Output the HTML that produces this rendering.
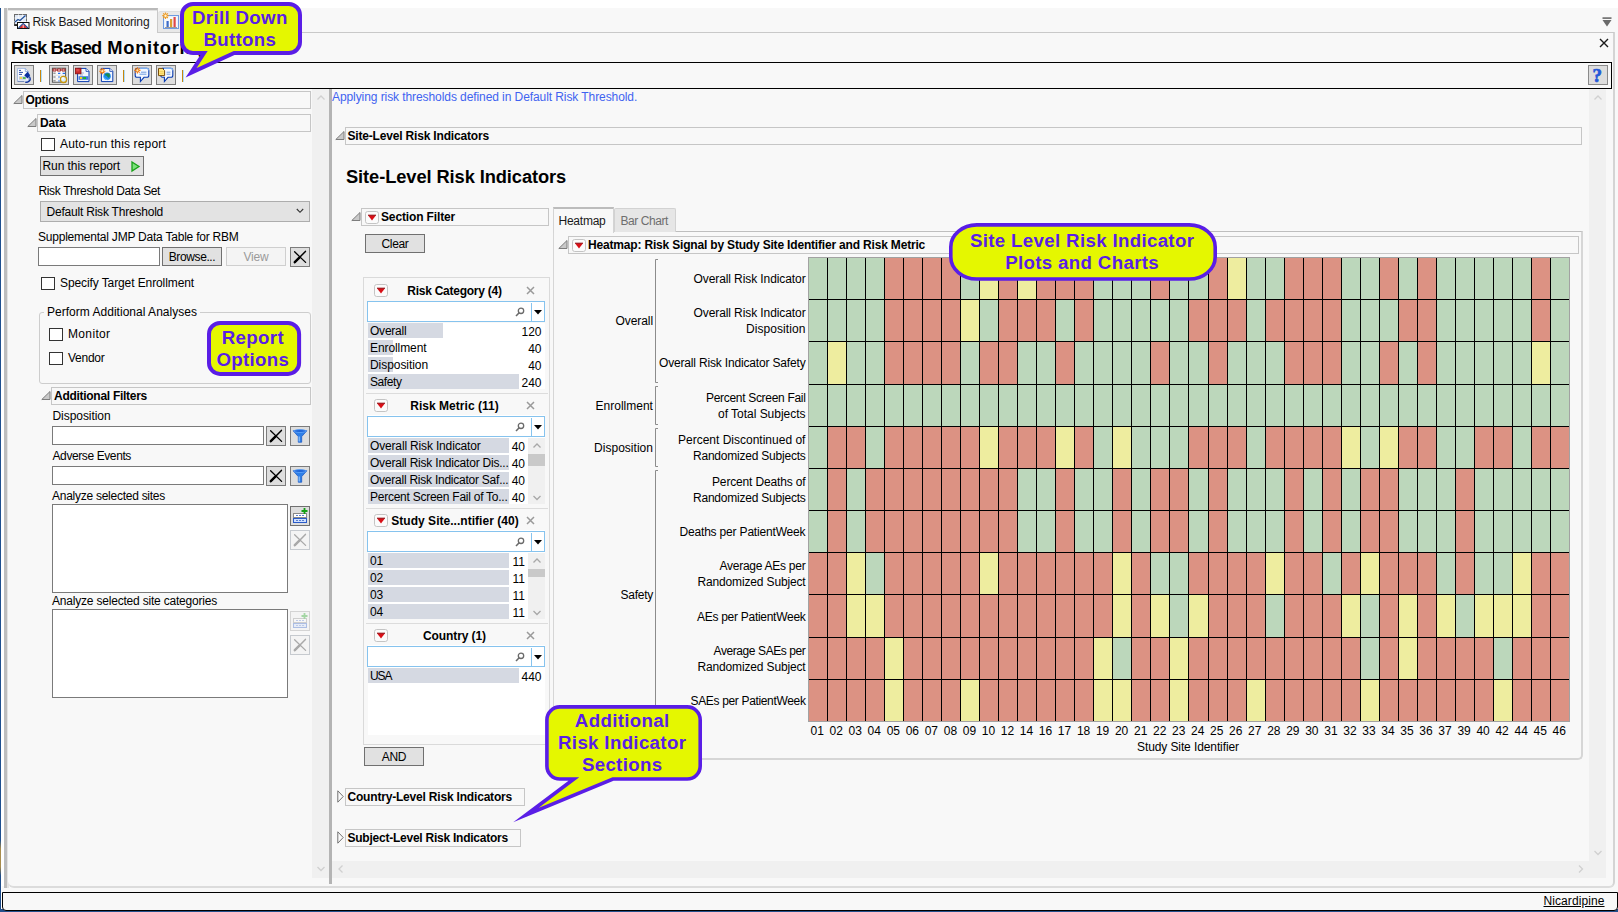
<!DOCTYPE html>
<html lang="en"><head><meta charset="utf-8"><title>Risk Based Monitoring</title>
<style>
html,body{margin:0;padding:0;background:#fff;}
body{width:1618px;height:912px;overflow:hidden;position:relative;font-family:"Liberation Sans",Arial,sans-serif;font-size:12px;color:#000;}
#app{position:absolute;left:0;top:0;width:1618px;height:912px;overflow:hidden;background:#fff;}
#app div,#app svg{position:absolute;box-sizing:border-box;}
#app svg{overflow:visible;}
#app svg text{font-family:"Liberation Sans",Arial,sans-serif;}
.t{white-space:nowrap;}
</style></head><body>
<div id="app">
<div style="left:0px;top:8px;width:1.2px;height:904px;background:linear-gradient(#1d4f8f 0,#1d4f8f 92%,#a88c4c 93%,#a88c4c 95%,#1b4a88 96%);"></div>
<div style="left:0px;top:909px;width:1618px;height:3px;background:#24508c;"></div>
<div style="left:2px;top:886px;width:1616px;height:8px;background:#f8f8f8;"></div>
<div style="left:4px;top:8px;width:3px;height:880px;background:#bdbdbd;"></div>
<div style="left:7px;top:8px;width:1.5px;height:880px;background:#e3e3e3;"></div>
<div style="left:8px;top:8px;width:1610px;height:25px;background:#f8f8f8;"></div>
<div style="left:1608px;top:32px;width:10px;height:860px;background:#f8f8f8;"></div>
<div style="left:8px;top:32px;width:1607px;height:856px;background:#f8f8f8;border-right:2px solid #d4d4d4;border-bottom:2px solid #dcdcdc;border-radius:0 0 6px 6px;"></div>
<div style="left:8px;top:8px;width:149.5px;height:25px;background:#f8f8f8;border-top:2px solid #b9b9b9;border-right:1px solid #c9c9c9;"></div>
<div style="left:8px;top:10px;width:148.5px;height:1px;background:#e2e2e2;"></div>
<div style="left:157.5px;top:11px;width:30px;height:21.5px;background:#e8e8e8;border-radius:3px 0 0 0;border-top:1px solid #dedede;"></div>
<div style="left:157px;top:32px;width:1457px;height:1px;background:#c9c9c9;"></div>
<svg style="left:14px;top:14px;" width="16" height="15" viewBox="0 0 16 15"><rect x="0.5" y="0.5" width="12" height="11" fill="#dfe8f5" stroke="#6b6b6b"/><path d="M0.5 4 H12.5 M0.5 7.5 H12.5 M4.5 0.5 V11.5 M8.5 0.5 V11.5" stroke="#f4f7fb" stroke-width="1"/><path d="M1 8 L4 5.5 L6 6.5 L11.5 1.5" stroke="#1f4e9a" stroke-width="1.2" fill="none"/><path d="M0.5 11 H4" stroke="#111" stroke-width="1.6"/><rect x="3.5" y="8.5" width="11.5" height="6" fill="#fff" stroke="#111"/><path d="M5 14 L9.2 9.4 L13.5 14 Z" fill="#e02f2f"/><path d="M9.2 9.4 L9.2 14" stroke="#fff" stroke-width="0.8"/><path d="M4.5 14 L9.2 9.4 L14 14" stroke="#1f4e9a" stroke-width="1.1" fill="none"/></svg>
<div class="t" style="left:32.5px;top:14px;font-size:12px;line-height:16px;color:#1a1a1a;letter-spacing:-0.15px;">Risk Based Monitoring</div>
<svg style="left:162px;top:12px;" width="18" height="17" viewBox="0 0 18 17"><rect x="1.5" y="3.5" width="15" height="13" fill="#dfeaf8" stroke="#6f9be0"/><rect x="2.5" y="4.5" width="13" height="11" fill="#f6f9fd"/><rect x="4.5" y="9" width="2.2" height="6" fill="#3c6cc8"/><rect x="8" y="7" width="2.2" height="8" fill="#dba030"/><rect x="11.5" y="5" width="2.2" height="10" fill="#e04848"/><path d="M3 15.5 H15" stroke="#9a9a9a"/><path d="M3.5 0.5 L3.5 7 M0.3 3.7 L6.7 3.7 M1.2 1.4 L5.8 6 M5.8 1.4 L1.2 6" stroke="#f09a20" stroke-width="1.2"/><circle cx="3.5" cy="3.7" r="1.2" fill="#fff3d0"/></svg>
<svg style="left:1602px;top:17px;" width="10" height="10" viewBox="0 0 10 10"><rect x="0.5" y="0.3" width="9" height="1.6" fill="#6a6a6a"/><path d="M0.5 3 L9.5 3 L5 9.6 Z" fill="#6a6a6a"/></svg>
<svg style="left:1599px;top:38px;" width="10" height="10" viewBox="0 0 10 10"><path d="M1 1 L9 9 M9 1 L1 9" stroke="#1a1a1a" stroke-width="1.4" fill="none"/></svg>
<div class="t" style="left:11px;top:36px;font-size:18.3px;line-height:23px;font-weight:bold;letter-spacing:-0.82px;">Risk Based</div>
<div class="t" style="left:107.3px;top:36px;font-size:18.3px;line-height:23px;font-weight:bold;letter-spacing:0.75px;">Monitoring</div>
<div class="b" style="left:11px;top:62px;width:1601px;height:27px;border:1px solid #000;background:#f8f8f8;"></div>
<div class="b" style="left:14px;top:65px;width:20px;height:20px;border:1px solid #7c7c7c;background:#dedede;"></div>
<svg style="left:16px;top:67px;" width="16" height="16" viewBox="0 0 16 16"><path d="M1.6 1.4 H9.3 L12.4 4.5 V14.2 H1.6 Z" fill="#fdfdff" stroke="#9db4dd" stroke-width="0.9"/><path d="M9.3 1.4 V4.5 H12.4" fill="none" stroke="#7f9fd6" stroke-width="0.8"/><path d="M3 3.4 H5 M3 5.4 H7 M3 7.4 H6" stroke="#2a4fa8" stroke-width="1"/><rect x="3" y="9.3" width="7.4" height="3.4" fill="#b8c8e6"/><rect x="3.8" y="10" width="2.2" height="2" fill="#f6d24a"/><rect x="7" y="10" width="2.6" height="2" fill="#58b858"/><path d="M8.2 8.2 L11.6 4.8 L14.2 8.2 L11.6 11.6 Z" fill="#0a2f9e"/><path d="M13.4 9.5 Q15.2 12.5 13 14.3 Q11.5 15.5 9.3 15.3" fill="none" stroke="#0a2f9e" stroke-width="1.3"/><path d="M1.6 14.5 H8" stroke="#6f86b8" stroke-width="0.9"/></svg>
<div class="b" style="left:49px;top:65px;width:20px;height:20px;border:1px solid #7c7c7c;background:#dedede;"></div>
<svg style="left:51px;top:67px;" width="16" height="16" viewBox="0 0 16 16"><rect x="1.4" y="1.2" width="13.2" height="14" fill="#fbfbfb" stroke="#555" stroke-width="1"/><path d="M2 2 H5 V4 H2 Z M6.3 2 H9.7 V4 H6.3 Z M11 2 H14 V4 H11 Z" fill="#fff" stroke="#a31c1c" stroke-width="1"/><path d="M2.3 6.3 H4.6 M2.3 10 H4.6 M2.3 13.8 H4.6" stroke="#9a9a9a" stroke-width="1.4"/><path d="M2 8.2 H14 M2 12 H8" stroke="#d0d0d0" stroke-width="0.7"/><path d="M7 6.3 H9.3 M11.6 6.3 H14 M7.4 10 H8.6 M7.4 13.8 H8.6" stroke="#1e6ef0" stroke-width="1.3"/><circle cx="12.5" cy="12.4" r="3.1" fill="#d6ecfb" stroke="#c8960c" stroke-width="1.3"/><circle cx="11.8" cy="11.6" r="1.3" fill="#ffffff" opacity="0.8"/></svg>
<div class="b" style="left:73px;top:65px;width:20px;height:20px;border:1px solid #7c7c7c;background:#dedede;"></div>
<svg style="left:75px;top:67px;" width="16" height="16" viewBox="0 0 16 16"><path d="M2.6 1.4 H11 L14 4.4 V14.6 H2.6 Z" fill="#f2f6fd" stroke="#0a3cb0" stroke-width="1"/><path d="M11 1.4 V4.4 H14" fill="#fff" stroke="#0a3cb0" stroke-width="0.8"/><path d="M5 6 H9 M5 8 H8" stroke="#8a9cc0" stroke-width="0.8"/><rect x="3.6" y="9.2" width="9.6" height="3.6" fill="#3c78e0"/><rect x="4.9" y="10" width="2.2" height="2" fill="#f6d21e"/><rect x="8.2" y="10" width="2.8" height="2" fill="#1eb81e"/><rect x="0.4" y="1.2" width="5.6" height="5.6" fill="#c82828" stroke="#8a1010" stroke-width="0.8"/><rect x="1.2" y="2" width="3.2" height="2.4" fill="#e05050" opacity="0.8"/></svg>
<div class="b" style="left:97px;top:65px;width:20px;height:20px;border:1px solid #7c7c7c;background:#dedede;"></div>
<svg style="left:99px;top:67px;" width="16" height="16" viewBox="0 0 16 16"><path d="M2.4 1.4 H10.8 L13.8 4.4 V14.6 H2.4 Z" fill="#f4f8ff" stroke="#0a3cb0" stroke-width="1"/><path d="M10.8 1.4 V4.4 H13.8" fill="#fff" stroke="#0a3cb0" stroke-width="0.8"/><circle cx="8.1" cy="9.3" r="3.7" fill="#1e8cf0"/><path d="M6.2 7 Q8 5.6 10.4 6.6 Q11.6 8.4 10.4 10.6 Q8.8 11 8.2 9.6 Q7.8 8.2 6.2 8.4 Z" fill="#1a8a50"/><path d="M5 10.6 Q6.4 12.6 8.4 12.9 Q6.6 12.6 5 10.6 Z" fill="#6cc8ff" stroke="#6cc8ff" stroke-width="0.6"/><g stroke="#f07a10" stroke-width="1.1"><path d="M3.3 1.1 V7.3 M0.2 4.2 H6.4 M1.07 1.97 L5.53 6.43 M5.53 1.97 L1.07 6.43"/></g><circle cx="3.3" cy="4.2" r="1.1" fill="#ffe9b0"/></svg>
<div class="b" style="left:132px;top:65px;width:20px;height:20px;border:1px solid #7c7c7c;background:#dedede;"></div>
<svg style="left:134px;top:67px;" width="16" height="16" viewBox="0 0 16 16"><path d="M3 1.4 H13 Q14.8 1.4 14.8 3.4 V8.2 Q14.8 10.3 13 10.3 H10 L6.4 14.6 V10.3 H3 Q1.2 10.3 1.2 8.2 V3.4 Q1.2 1.4 3 1.4 Z" fill="#f4f8ff" stroke="#0a3cb0" stroke-width="1.1"/><path d="M3 1.4 H13 Q14.8 1.4 14.8 3.4" fill="none" stroke="#7fb0f0" stroke-width="1.1"/><path d="M7 5.2 H12.4 M5.4 7.2 H12.4" stroke="#6f9be0" stroke-width="1"/><g stroke="#f07a10" stroke-width="1.1"><path d="M3.4 0.3 V6.5 M0.3 3.4 H6.5 M1.17 1.17 L5.63 5.63 M5.63 1.17 L1.17 5.63"/></g><circle cx="3.4" cy="3.4" r="1.1" fill="#ffe9b0"/></svg>
<div class="b" style="left:156px;top:65px;width:20px;height:20px;border:1px solid #7c7c7c;background:#dedede;"></div>
<svg style="left:158px;top:67px;" width="16" height="16" viewBox="0 0 16 16"><path d="M4.4 1.4 H13 Q14.8 1.4 14.8 3.4 V8.2 Q14.8 10.3 13 10.3 H10 L6.4 14.6 V10.3 H4.4 Q2.8 10.3 2.8 8.2 V3.4 Z" fill="#f4f8ff" stroke="#0a3cb0" stroke-width="1.1"/><path d="M6 1.4 H13 Q14.8 1.4 14.8 3.4" fill="none" stroke="#7fb0f0" stroke-width="1.1"/><path d="M8.6 5.2 H12.4 M8.6 7.2 H12.4" stroke="#6f9be0" stroke-width="1"/><path d="M0.5 1.4 H4.4 L6.6 3.6 V8.6 H0.5 Z" fill="#ffe680" stroke="#7a4e0c" stroke-width="1"/><path d="M1.4 4.6 H5.6 M1.4 6.4 H5.6" stroke="#f0cc50" stroke-width="0.8"/></svg>
<div style="left:40px;top:70px;width:1px;height:12px;background:#c8860c;"></div>
<div style="left:41px;top:70px;width:1px;height:12px;background:#a8dcff;"></div>
<div style="left:123px;top:70px;width:1px;height:12px;background:#c8860c;"></div>
<div style="left:124px;top:70px;width:1px;height:12px;background:#a8dcff;"></div>
<div style="left:182px;top:70px;width:1px;height:12px;background:#c8860c;"></div>
<div style="left:183px;top:70px;width:1px;height:12px;background:#a8dcff;"></div>
<div class="b" style="left:1587.5px;top:65px;width:20px;height:20px;border:1px solid #8a8a8a;background:#dddddd;"></div>
<div class="t" style="left:1592.5px;top:64px;font-size:19px;line-height:23px;font-weight:bold;color:#2458d8;font-family:'Liberation Serif',serif;-webkit-text-stroke:0.7px #2458d8;">?</div>
<div style="left:311.5px;top:89px;width:17.5px;height:788.5px;background:#f0f0f0;"></div>
<div style="left:329px;top:89px;width:3px;height:795px;background:#b4b4b4;"></div>
<svg style="left:316.5px;top:94.5px;" width="8" height="6" viewBox="0 0 8 6"><path d="M0.5 4.5 L4 1 L7.5 4.5" stroke="#d0d0d0" stroke-width="1.3" fill="none"/></svg>
<svg style="left:316.5px;top:866px;" width="8" height="6" viewBox="0 0 8 6"><path d="M0.5 1 L4 4.5 L7.5 1" stroke="#d0d0d0" stroke-width="1.3" fill="none"/></svg>
<div style="left:1588.5px;top:89px;width:17px;height:788.5px;background:#f0f0f0;"></div>
<div style="left:332px;top:860.5px;width:1273.5px;height:17px;background:#f0f0f0;"></div>
<svg style="left:1593.5px;top:94.5px;" width="8" height="6" viewBox="0 0 8 6"><path d="M0.5 4.5 L4 1 L7.5 4.5" stroke="#d0d0d0" stroke-width="1.3" fill="none"/></svg>
<svg style="left:1593.5px;top:849.5px;" width="8" height="6" viewBox="0 0 8 6"><path d="M0.5 1 L4 4.5 L7.5 1" stroke="#d0d0d0" stroke-width="1.3" fill="none"/></svg>
<svg style="left:337.5px;top:865px;" width="6" height="8" viewBox="0 0 6 8"><path d="M4.5 0.5 L1 4 L4.5 7.5" stroke="#d0d0d0" stroke-width="1.3" fill="none"/></svg>
<svg style="left:1577.5px;top:865px;" width="6" height="8" viewBox="0 0 6 8"><path d="M1 0.5 L4.5 4 L1 7.5" stroke="#d0d0d0" stroke-width="1.3" fill="none"/></svg>
<div class="b" style="left:2px;top:892px;width:1616px;height:19px;border:1px solid #000;background:#f8f8f8;border-radius:0 0 4px 4px;"></div>
<div class="t" style="left:1543.5px;top:893px;font-size:12px;line-height:16px;letter-spacing:0.09px;text-decoration:underline;">Nicardipine</div>
<div class="b" style="left:23px;top:91px;width:288px;height:18px;border:1px solid #c6c6c6;background:#f8f8f8;"></div>
<svg style="left:12.5px;top:95px;" width="10" height="9" viewBox="0 0 10 9"><path d="M9 0.5 L9 8.5 L0.8 8.5 Z" fill="#c9c9c9" stroke="#7d7d7d" stroke-width="1"/></svg>
<div class="t" style="left:25.5px;top:92px;font-size:12px;line-height:16px;font-weight:bold;letter-spacing:-0.33px;">Options</div>
<div class="b" style="left:37px;top:114px;width:274px;height:18px;border:1px solid #c6c6c6;background:#f8f8f8;"></div>
<svg style="left:26.5px;top:118px;" width="10" height="9" viewBox="0 0 10 9"><path d="M9 0.5 L9 8.5 L0.8 8.5 Z" fill="#c9c9c9" stroke="#7d7d7d" stroke-width="1"/></svg>
<div class="t" style="left:40px;top:115px;font-size:12px;line-height:16px;font-weight:bold;letter-spacing:-0.14px;">Data</div>
<div class="b" style="left:41px;top:138px;width:13.5px;height:12.5px;border:1px solid #333;background:#fff;"></div>
<div class="t" style="left:60px;top:136px;font-size:12px;line-height:16px;letter-spacing:0.16px;">Auto-run this report</div>
<div class="b" style="left:40px;top:156px;width:104px;height:20px;border:1px solid #707070;background:#e1e1e1;"></div>
<div class="t" style="left:42.5px;top:158px;font-size:12px;line-height:16px;color:#000;letter-spacing:-0.08px;">Run this report</div>
<svg style="left:131px;top:160.5px;" width="9" height="11" viewBox="0 0 9 11"><path d="M1 1 L8 5.5 L1 10 Z" fill="#7be07b" stroke="#17a017" stroke-width="1.3"/></svg>
<div class="t" style="left:38.5px;top:183px;font-size:12px;line-height:16px;letter-spacing:-0.36px;">Risk Threshold Data Set</div>
<div class="b" style="left:40px;top:201px;width:270px;height:21px;border:1px solid #adadad;background:#e3e3e3;"></div>
<div class="t" style="left:46.5px;top:204px;font-size:12px;line-height:16px;letter-spacing:-0.21px;">Default Risk Threshold</div>
<svg style="left:296px;top:208px;" width="8" height="6" viewBox="0 0 8 6"><path d="M0.8 1 L4 4.3 L7.2 1" stroke="#333" stroke-width="1.1" fill="none"/></svg>
<div class="t" style="left:38px;top:229px;font-size:12px;line-height:16px;letter-spacing:-0.22px;">Supplemental JMP Data Table for RBM</div>
<div class="b" style="left:38px;top:247px;width:122px;height:19px;border:1px solid #7a7a7a;background:#fff;"></div>
<div class="b" style="left:162px;top:247px;width:60px;height:19px;border:1px solid #707070;background:#e1e1e1;"></div>
<div class="t" style="left:168.75px;top:249px;font-size:12px;line-height:16px;color:#000;letter-spacing:-0.39px;">Browse...</div>
<div class="b" style="left:226px;top:247px;width:60px;height:19px;border:1px solid #cfcfcf;background:#f4f4f4;"></div>
<div class="t" style="left:243.5px;top:249px;font-size:12px;line-height:16px;color:#9a9a9a;letter-spacing:-0.2px;">View</div>
<div class="b" style="left:289.5px;top:247px;width:20px;height:20px;border:1px solid #7c7c7c;background:#dedede;"></div>
<svg style="left:292.5px;top:250px;" width="14" height="14" viewBox="0 0 14 14"><path d="M1.6 1.8 L12.6 12.4" stroke="#000" stroke-width="1.3" fill="none" stroke-linecap="round"/><path d="M12.4 1.4 L7 7 L1.6 12.4" stroke="#000" stroke-width="1.5" fill="none" stroke-linecap="round"/><path d="M6.6 7.4 L1.8 12.2" stroke="#000" stroke-width="2.4" fill="none" stroke-linecap="round"/></svg>
<div class="b" style="left:41px;top:277px;width:13.5px;height:12.5px;border:1px solid #333;background:#fff;"></div>
<div class="t" style="left:60px;top:275px;font-size:12px;line-height:16px;letter-spacing:-0.1px;">Specify Target Enrollment</div>
<div class="b" style="left:39px;top:312px;width:272px;height:72px;border:1px solid #cdcdcd;border-radius:3px;background:#f8f8f8;"></div>
<div style="left:44px;top:306px;width:156px;height:12px;background:#f8f8f8;"></div>
<div class="t" style="left:47px;top:304px;font-size:12px;line-height:16px;letter-spacing:0.02px;">Perform Additional Analyses</div>
<div class="b" style="left:49px;top:328px;width:13.5px;height:12.5px;border:1px solid #333;background:#fff;"></div>
<div class="t" style="left:68px;top:326px;font-size:12px;line-height:16px;letter-spacing:0.35px;">Monitor</div>
<div class="b" style="left:49px;top:352px;width:13.5px;height:12.5px;border:1px solid #333;background:#fff;"></div>
<div class="t" style="left:68px;top:350px;font-size:12px;line-height:16px;letter-spacing:-0.26px;">Vendor</div>
<div class="b" style="left:51px;top:387px;width:260px;height:18px;border:1px solid #c6c6c6;background:#f8f8f8;"></div>
<svg style="left:40.5px;top:391px;" width="10" height="9" viewBox="0 0 10 9"><path d="M9 0.5 L9 8.5 L0.8 8.5 Z" fill="#c9c9c9" stroke="#7d7d7d" stroke-width="1"/></svg>
<div class="t" style="left:54px;top:388px;font-size:12px;line-height:16px;font-weight:bold;letter-spacing:-0.28px;">Additional Filters</div>
<div class="t" style="left:52.5px;top:408px;font-size:12px;line-height:16px;letter-spacing:-0.06px;">Disposition</div>
<div class="b" style="left:52px;top:426px;width:212px;height:19px;border:1px solid #7a7a7a;background:#fff;"></div>
<div class="b" style="left:265.5px;top:426px;width:20px;height:20px;border:1px solid #7c7c7c;background:#dedede;"></div>
<svg style="left:268.5px;top:429px;" width="14" height="14" viewBox="0 0 14 14"><path d="M1.6 1.8 L12.6 12.4" stroke="#000" stroke-width="1.3" fill="none" stroke-linecap="round"/><path d="M12.4 1.4 L7 7 L1.6 12.4" stroke="#000" stroke-width="1.5" fill="none" stroke-linecap="round"/><path d="M6.6 7.4 L1.8 12.2" stroke="#000" stroke-width="2.4" fill="none" stroke-linecap="round"/></svg>
<div class="b" style="left:289.5px;top:426px;width:20px;height:20px;border:1px solid #7c7c7c;background:#dedede;"></div>
<svg style="left:292.5px;top:429px;" width="14" height="14" viewBox="0 0 14 14"><path d="M0.2 1.8 Q7 -0.4 13.8 1.8 L8.7 7.6 L8.7 13.2 L5.3 13.2 L5.3 7.6 Z" fill="#2f7fe6" stroke="#1a5ac8" stroke-width="0.8"/><path d="M6.2 7.6 V12.6" stroke="#8cc4ff" stroke-width="1.2"/><ellipse cx="7" cy="2" rx="6" ry="1.5" fill="#1f66d8" stroke="#6fb0ff" stroke-width="0.7"/></svg>
<div class="t" style="left:52.5px;top:448px;font-size:12px;line-height:16px;letter-spacing:-0.4px;">Adverse Events</div>
<div class="b" style="left:52px;top:466px;width:212px;height:19px;border:1px solid #7a7a7a;background:#fff;"></div>
<div class="b" style="left:265.5px;top:466px;width:20px;height:20px;border:1px solid #7c7c7c;background:#dedede;"></div>
<svg style="left:268.5px;top:469px;" width="14" height="14" viewBox="0 0 14 14"><path d="M1.6 1.8 L12.6 12.4" stroke="#000" stroke-width="1.3" fill="none" stroke-linecap="round"/><path d="M12.4 1.4 L7 7 L1.6 12.4" stroke="#000" stroke-width="1.5" fill="none" stroke-linecap="round"/><path d="M6.6 7.4 L1.8 12.2" stroke="#000" stroke-width="2.4" fill="none" stroke-linecap="round"/></svg>
<div class="b" style="left:289.5px;top:466px;width:20px;height:20px;border:1px solid #7c7c7c;background:#dedede;"></div>
<svg style="left:292.5px;top:469px;" width="14" height="14" viewBox="0 0 14 14"><path d="M0.2 1.8 Q7 -0.4 13.8 1.8 L8.7 7.6 L8.7 13.2 L5.3 13.2 L5.3 7.6 Z" fill="#2f7fe6" stroke="#1a5ac8" stroke-width="0.8"/><path d="M6.2 7.6 V12.6" stroke="#8cc4ff" stroke-width="1.2"/><ellipse cx="7" cy="2" rx="6" ry="1.5" fill="#1f66d8" stroke="#6fb0ff" stroke-width="0.7"/></svg>
<div class="t" style="left:52px;top:488px;font-size:12px;line-height:16px;letter-spacing:-0.26px;">Analyze selected sites</div>
<div class="b" style="left:52px;top:504px;width:236px;height:89px;border:1px solid #7a7a7a;background:#fff;"></div>
<div class="b" style="left:289.5px;top:506px;width:20px;height:20px;border:1px solid #707070;background:#dedede;"></div>
<svg style="left:291.5px;top:508px;" width="16" height="16" viewBox="0 0 16 16"><g opacity="1"><rect x="1.5" y="5.5" width="13" height="4" fill="#fff" stroke="#8a8a8a"/><rect x="1.5" y="10.5" width="13" height="4" fill="#cfe0ff" stroke="#2a5bc8"/><path d="M4 7.5 H12 M4 12.5 H12" stroke="#5a7fd0" stroke-dasharray="2 1"/><path d="M12.5 0 V6 M9.5 3 H15.5" stroke="#14a014" stroke-width="1.8"/></g></svg>
<div class="b" style="left:289.5px;top:530px;width:20px;height:20px;border:1px solid #c6cacf;background:#f4f4f4;"></div>
<svg style="left:292.5px;top:533px;" width="14" height="14" viewBox="0 0 14 14"><path d="M1.6 1.8 L12.6 12.4" stroke="#a9a9a9" stroke-width="1.3" fill="none" stroke-linecap="round"/><path d="M12.4 1.4 L7 7 L1.6 12.4" stroke="#a9a9a9" stroke-width="1.5" fill="none" stroke-linecap="round"/><path d="M6.6 7.4 L1.8 12.2" stroke="#a9a9a9" stroke-width="2.4" fill="none" stroke-linecap="round"/></svg>
<div class="t" style="left:52px;top:593px;font-size:12px;line-height:16px;letter-spacing:-0.2px;">Analyze selected site categories</div>
<div class="b" style="left:52px;top:609px;width:236px;height:89px;border:1px solid #7a7a7a;background:#fff;"></div>
<div class="b" style="left:289.5px;top:611px;width:20px;height:20px;border:1px solid #d4d4d4;background:#f4f4f4;"></div>
<svg style="left:291.5px;top:613px;" width="16" height="16" viewBox="0 0 16 16"><g opacity="0.35"><rect x="1.5" y="5.5" width="13" height="4" fill="#fff" stroke="#8a8a8a"/><rect x="1.5" y="10.5" width="13" height="4" fill="#cfe0ff" stroke="#2a5bc8"/><path d="M4 7.5 H12 M4 12.5 H12" stroke="#5a7fd0" stroke-dasharray="2 1"/><path d="M12.5 0 V6 M9.5 3 H15.5" stroke="#14a014" stroke-width="1.8"/></g></svg>
<div class="b" style="left:289.5px;top:635px;width:20px;height:20px;border:1px solid #c6cacf;background:#f4f4f4;"></div>
<svg style="left:292.5px;top:638px;" width="14" height="14" viewBox="0 0 14 14"><path d="M1.6 1.8 L12.6 12.4" stroke="#a9a9a9" stroke-width="1.3" fill="none" stroke-linecap="round"/><path d="M12.4 1.4 L7 7 L1.6 12.4" stroke="#a9a9a9" stroke-width="1.5" fill="none" stroke-linecap="round"/><path d="M6.6 7.4 L1.8 12.2" stroke="#a9a9a9" stroke-width="2.4" fill="none" stroke-linecap="round"/></svg>
<div class="t" style="left:332px;top:89px;font-size:12px;line-height:16px;color:#3f63f0;letter-spacing:-0.08px;">Applying risk thresholds defined in Default Risk Threshold.</div>
<div class="b" style="left:345px;top:127px;width:1237px;height:18px;border:1px solid #c6c6c6;background:#f8f8f8;"></div>
<svg style="left:334.5px;top:131px;" width="10" height="9" viewBox="0 0 10 9"><path d="M9 0.5 L9 8.5 L0.8 8.5 Z" fill="#c9c9c9" stroke="#7d7d7d" stroke-width="1"/></svg>
<div class="t" style="left:347.5px;top:128px;font-size:12px;line-height:16px;font-weight:bold;letter-spacing:-0.18px;">Site-Level Risk Indicators</div>
<div class="t" style="left:346px;top:165px;font-size:18.3px;line-height:23px;font-weight:bold;letter-spacing:-0.09px;">Site-Level Risk Indicators</div>
<div class="b" style="left:361px;top:208px;width:188px;height:18px;border:1px solid #c6c6c6;background:#f8f8f8;"></div>
<svg style="left:350.5px;top:212px;" width="10" height="9" viewBox="0 0 10 9"><path d="M9 0.5 L9 8.5 L0.8 8.5 Z" fill="#c9c9c9" stroke="#7d7d7d" stroke-width="1"/></svg>
<svg style="left:365px;top:210.5px;" width="14" height="13" viewBox="0 0 14 13"><rect x="0.5" y="0.5" width="13" height="12" rx="2.2" fill="#fbfbfb" stroke="#c4c4c4"/><path d="M3 4.2 L11 4.2 L7 9.6 Z" fill="#d80f16"/><path d="M3 4.2 L11 4.2" stroke="#8e0a10" stroke-width="1"/></svg>
<div class="t" style="left:381px;top:209px;font-size:12px;line-height:16px;font-weight:bold;letter-spacing:-0.14px;">Section Filter</div>
<div class="b" style="left:365px;top:234px;width:60px;height:19px;border:1px solid #707070;background:#e1e1e1;"></div>
<div class="t" style="left:381.5px;top:236px;font-size:12px;line-height:16px;color:#000;letter-spacing:-0.34px;">Clear</div>
<div class="b" style="left:363px;top:277px;width:187px;height:467.5px;border:1px solid #dadada;background:#f8f8f8;"></div>
<div style="left:367.5px;top:323px;width:177px;height:412px;background:#fff;"></div>
<div style="left:365px;top:279px;width:183px;height:21px;background:#f8f8f8;"></div>
<svg style="left:374px;top:283.5px;" width="14" height="13" viewBox="0 0 14 13"><rect x="0.5" y="0.5" width="13" height="12" rx="2.2" fill="#fbfbfb" stroke="#c4c4c4"/><path d="M3 4.2 L11 4.2 L7 9.6 Z" fill="#d80f16"/><path d="M3 4.2 L11 4.2" stroke="#8e0a10" stroke-width="1"/></svg>
<div class="t" style="left:407.25px;top:283px;font-size:12px;line-height:16px;font-weight:bold;letter-spacing:-0.25px;">Risk Category (4)</div>
<svg style="left:526px;top:286px;" width="9" height="9" viewBox="0 0 9 9"><path d="M1 1 L8 8 M8 1 L1 8" stroke="#9a9a9a" stroke-width="1.5" fill="none"/></svg>
<div class="b" style="left:367px;top:301px;width:178px;height:21px;border:1px solid #86c3ee;background:#fff;"></div>
<div style="left:531px;top:302.5px;width:1px;height:18.5px;background:#86c3ee;"></div>
<svg style="left:515px;top:306.5px;" width="10" height="10" viewBox="0 0 10 10"><circle cx="6" cy="3.8" r="2.7" fill="none" stroke="#6a6a6a" stroke-width="1.3"/><path d="M4.2 5.8 L1 9" stroke="#6a6a6a" stroke-width="1.6"/></svg>
<svg style="left:534px;top:309.5px;" width="8" height="5" viewBox="0 0 8 5"><path d="M0 0 L8 0 L4 4.6 Z" fill="#000"/></svg>
<div style="left:368px;top:323px;width:74.5px;height:14.5px;background:#d5d9e2;"></div>
<div class="t" style="left:370px;top:323px;font-size:12px;line-height:16px;letter-spacing:-0.22px;">Overall</div>
<div class="t" style="left:521.48px;top:324px;font-size:12px;line-height:16px;">120</div>
<div style="left:368px;top:340px;width:24.5px;height:14.5px;background:#d5d9e2;"></div>
<div class="t" style="left:370px;top:340px;font-size:12px;line-height:16px;letter-spacing:-0.09px;">Enrollment</div>
<div class="t" style="left:528.15px;top:341px;font-size:12px;line-height:16px;">40</div>
<div style="left:368px;top:357px;width:24.5px;height:14.5px;background:#d5d9e2;"></div>
<div class="t" style="left:370px;top:357px;font-size:12px;line-height:16px;letter-spacing:-0.06px;">Disposition</div>
<div class="t" style="left:528.15px;top:358px;font-size:12px;line-height:16px;">40</div>
<div style="left:368px;top:374px;width:150.5px;height:14.5px;background:#d5d9e2;"></div>
<div class="t" style="left:370px;top:374px;font-size:12px;line-height:16px;letter-spacing:-0.42px;">Safety</div>
<div class="t" style="left:521.48px;top:375px;font-size:12px;line-height:16px;">240</div>
<div style="left:365px;top:389px;width:183px;height:4px;background:#f8f8f8;"></div>
<div style="left:366px;top:393px;width:182px;height:1px;background:#dcdcdc;"></div>
<div style="left:365px;top:394px;width:183px;height:21px;background:#f8f8f8;"></div>
<svg style="left:374px;top:398.5px;" width="14" height="13" viewBox="0 0 14 13"><rect x="0.5" y="0.5" width="13" height="12" rx="2.2" fill="#fbfbfb" stroke="#c4c4c4"/><path d="M3 4.2 L11 4.2 L7 9.6 Z" fill="#d80f16"/><path d="M3 4.2 L11 4.2" stroke="#8e0a10" stroke-width="1"/></svg>
<div class="t" style="left:410.25px;top:398px;font-size:12px;line-height:16px;font-weight:bold;letter-spacing:0.03px;">Risk Metric (11)</div>
<svg style="left:526px;top:401px;" width="9" height="9" viewBox="0 0 9 9"><path d="M1 1 L8 8 M8 1 L1 8" stroke="#9a9a9a" stroke-width="1.5" fill="none"/></svg>
<div class="b" style="left:367px;top:416px;width:178px;height:21px;border:1px solid #86c3ee;background:#fff;"></div>
<div style="left:531px;top:417.5px;width:1px;height:18.5px;background:#86c3ee;"></div>
<svg style="left:515px;top:421.5px;" width="10" height="10" viewBox="0 0 10 10"><circle cx="6" cy="3.8" r="2.7" fill="none" stroke="#6a6a6a" stroke-width="1.3"/><path d="M4.2 5.8 L1 9" stroke="#6a6a6a" stroke-width="1.6"/></svg>
<svg style="left:534px;top:424.5px;" width="8" height="5" viewBox="0 0 8 5"><path d="M0 0 L8 0 L4 4.6 Z" fill="#000"/></svg>
<div style="left:527.5px;top:438px;width:17px;height:68px;background:#f0f0f0;"></div>
<svg style="left:532.5px;top:443px;" width="8" height="6" viewBox="0 0 8 6"><path d="M0.5 4.5 L4 1 L7.5 4.5" stroke="#a8a8a8" stroke-width="1.3" fill="none"/></svg>
<svg style="left:532.5px;top:495px;" width="8" height="6" viewBox="0 0 8 6"><path d="M0.5 1 L4 4.5 L7.5 1" stroke="#a8a8a8" stroke-width="1.3" fill="none"/></svg>
<div style="left:527.5px;top:454px;width:17px;height:12px;background:#c9c9c9;"></div>
<div style="left:368px;top:438px;width:140.5px;height:14.5px;background:#d5d9e2;"></div>
<div class="t" style="left:370px;top:438px;font-size:12px;line-height:16px;letter-spacing:-0.16px;">Overall Risk Indicator</div>
<div class="t" style="left:511.65px;top:439px;font-size:12px;line-height:16px;">40</div>
<div style="left:368px;top:455px;width:140.5px;height:14.5px;background:#d5d9e2;"></div>
<div class="t" style="left:370px;top:455px;font-size:12px;line-height:16px;letter-spacing:-0.21px;">Overall Risk Indicator Dis...</div>
<div class="t" style="left:511.65px;top:456px;font-size:12px;line-height:16px;">40</div>
<div style="left:368px;top:472px;width:140.5px;height:14.5px;background:#d5d9e2;"></div>
<div class="t" style="left:370px;top:472px;font-size:12px;line-height:16px;letter-spacing:-0.24px;">Overall Risk Indicator Saf...</div>
<div class="t" style="left:511.65px;top:473px;font-size:12px;line-height:16px;">40</div>
<div style="left:368px;top:489px;width:140.5px;height:14.5px;background:#d5d9e2;"></div>
<div class="t" style="left:370px;top:489px;font-size:12px;line-height:16px;letter-spacing:-0.25px;">Percent Screen Fail of To...</div>
<div class="t" style="left:511.65px;top:490px;font-size:12px;line-height:16px;">40</div>
<div style="left:365px;top:504px;width:183px;height:4px;background:#f8f8f8;"></div>
<div style="left:366px;top:508px;width:182px;height:1px;background:#dcdcdc;"></div>
<div style="left:365px;top:509px;width:183px;height:21px;background:#f8f8f8;"></div>
<svg style="left:374px;top:513.5px;" width="14" height="13" viewBox="0 0 14 13"><rect x="0.5" y="0.5" width="13" height="12" rx="2.2" fill="#fbfbfb" stroke="#c4c4c4"/><path d="M3 4.2 L11 4.2 L7 9.6 Z" fill="#d80f16"/><path d="M3 4.2 L11 4.2" stroke="#8e0a10" stroke-width="1"/></svg>
<div class="t" style="left:391.25px;top:513px;font-size:12px;line-height:16px;font-weight:bold;letter-spacing:0.03px;">Study Site...ntifier (40)</div>
<svg style="left:526px;top:516px;" width="9" height="9" viewBox="0 0 9 9"><path d="M1 1 L8 8 M8 1 L1 8" stroke="#9a9a9a" stroke-width="1.5" fill="none"/></svg>
<div class="b" style="left:367px;top:531px;width:178px;height:21px;border:1px solid #86c3ee;background:#fff;"></div>
<div style="left:531px;top:532.5px;width:1px;height:18.5px;background:#86c3ee;"></div>
<svg style="left:515px;top:536.5px;" width="10" height="10" viewBox="0 0 10 10"><circle cx="6" cy="3.8" r="2.7" fill="none" stroke="#6a6a6a" stroke-width="1.3"/><path d="M4.2 5.8 L1 9" stroke="#6a6a6a" stroke-width="1.6"/></svg>
<svg style="left:534px;top:539.5px;" width="8" height="5" viewBox="0 0 8 5"><path d="M0 0 L8 0 L4 4.6 Z" fill="#000"/></svg>
<div style="left:527.5px;top:553px;width:17px;height:68px;background:#f0f0f0;"></div>
<svg style="left:532.5px;top:558px;" width="8" height="6" viewBox="0 0 8 6"><path d="M0.5 4.5 L4 1 L7.5 4.5" stroke="#a8a8a8" stroke-width="1.3" fill="none"/></svg>
<svg style="left:532.5px;top:610px;" width="8" height="6" viewBox="0 0 8 6"><path d="M0.5 1 L4 4.5 L7.5 1" stroke="#a8a8a8" stroke-width="1.3" fill="none"/></svg>
<div style="left:527.5px;top:569px;width:17px;height:8px;background:#c9c9c9;"></div>
<div style="left:368px;top:553px;width:140.5px;height:14.5px;background:#d5d9e2;"></div>
<div class="t" style="left:370px;top:553px;font-size:12px;line-height:16px;letter-spacing:-0.14px;">01</div>
<div class="t" style="left:512.54px;top:554px;font-size:12px;line-height:16px;">11</div>
<div style="left:368px;top:570px;width:140.5px;height:14.5px;background:#d5d9e2;"></div>
<div class="t" style="left:370px;top:570px;font-size:12px;line-height:16px;letter-spacing:-0.14px;">02</div>
<div class="t" style="left:512.54px;top:571px;font-size:12px;line-height:16px;">11</div>
<div style="left:368px;top:587px;width:140.5px;height:14.5px;background:#d5d9e2;"></div>
<div class="t" style="left:370px;top:587px;font-size:12px;line-height:16px;letter-spacing:-0.14px;">03</div>
<div class="t" style="left:512.54px;top:588px;font-size:12px;line-height:16px;">11</div>
<div style="left:368px;top:604px;width:140.5px;height:14.5px;background:#d5d9e2;"></div>
<div class="t" style="left:370px;top:604px;font-size:12px;line-height:16px;letter-spacing:-0.14px;">04</div>
<div class="t" style="left:512.54px;top:605px;font-size:12px;line-height:16px;">11</div>
<div style="left:365px;top:619px;width:183px;height:4px;background:#f8f8f8;"></div>
<div style="left:366px;top:623px;width:182px;height:1px;background:#dcdcdc;"></div>
<div style="left:365px;top:624px;width:183px;height:21px;background:#f8f8f8;"></div>
<svg style="left:374px;top:628.5px;" width="14" height="13" viewBox="0 0 14 13"><rect x="0.5" y="0.5" width="13" height="12" rx="2.2" fill="#fbfbfb" stroke="#c4c4c4"/><path d="M3 4.2 L11 4.2 L7 9.6 Z" fill="#d80f16"/><path d="M3 4.2 L11 4.2" stroke="#8e0a10" stroke-width="1"/></svg>
<div class="t" style="left:423px;top:628px;font-size:12px;line-height:16px;font-weight:bold;letter-spacing:-0.09px;">Country (1)</div>
<svg style="left:526px;top:631px;" width="9" height="9" viewBox="0 0 9 9"><path d="M1 1 L8 8 M8 1 L1 8" stroke="#9a9a9a" stroke-width="1.5" fill="none"/></svg>
<div class="b" style="left:367px;top:646px;width:178px;height:21px;border:1px solid #86c3ee;background:#fff;"></div>
<div style="left:531px;top:647.5px;width:1px;height:18.5px;background:#86c3ee;"></div>
<svg style="left:515px;top:651.5px;" width="10" height="10" viewBox="0 0 10 10"><circle cx="6" cy="3.8" r="2.7" fill="none" stroke="#6a6a6a" stroke-width="1.3"/><path d="M4.2 5.8 L1 9" stroke="#6a6a6a" stroke-width="1.6"/></svg>
<svg style="left:534px;top:654.5px;" width="8" height="5" viewBox="0 0 8 5"><path d="M0 0 L8 0 L4 4.6 Z" fill="#000"/></svg>
<div style="left:368px;top:668px;width:150.5px;height:14.5px;background:#d5d9e2;"></div>
<div class="t" style="left:370px;top:668px;font-size:12px;line-height:16px;letter-spacing:-1.06px;">USA</div>
<div class="t" style="left:521.48px;top:669px;font-size:12px;line-height:16px;">440</div>
<div class="b" style="left:364px;top:747px;width:60px;height:19px;border:1px solid #707070;background:#e1e1e1;"></div>
<div class="t" style="left:381.75px;top:749px;font-size:12px;line-height:16px;color:#000;letter-spacing:-0.28px;">AND</div>
<div class="b" style="left:345px;top:788px;width:180px;height:18px;border:1px solid #c6c6c6;background:#f8f8f8;"></div>
<svg style="left:336.5px;top:789.5px;" width="8" height="13" viewBox="0 0 8 13"><path d="M0.8 0.8 L6.2 6.5 L0.8 12.2 Z" fill="#fafafa" stroke="#727272" stroke-width="1"/></svg>
<div class="t" style="left:347.5px;top:789px;font-size:12px;line-height:16px;font-weight:bold;letter-spacing:-0.19px;">Country-Level Risk Indicators</div>
<div class="b" style="left:345px;top:829px;width:176px;height:18px;border:1px solid #c6c6c6;background:#f8f8f8;"></div>
<svg style="left:336.5px;top:830.5px;" width="8" height="13" viewBox="0 0 8 13"><path d="M0.8 0.8 L6.2 6.5 L0.8 12.2 Z" fill="#fafafa" stroke="#727272" stroke-width="1"/></svg>
<div class="t" style="left:347.5px;top:830px;font-size:12px;line-height:16px;font-weight:bold;letter-spacing:-0.24px;">Subject-Level Risk Indicators</div>
<div class="b" style="left:553px;top:231px;width:1030px;height:528.5px;border:1px solid #d6d6d6;border-top-color:#bebebe;border-width:1px 2px 2px 1px;border-radius:0 0 5px 0;background:#f8f8f8;"></div>
<div class="b" style="left:553px;top:207px;width:61px;height:25.5px;background:#f8f8f8;border:1px solid #d4d4d4;border-top:2px solid #bcbcbc;border-bottom:none;"></div>
<div class="b" style="left:614px;top:208px;width:62px;height:23.5px;background:#e6e6e6;border:1px solid #d2d2d2;border-bottom:none;border-radius:2px 2px 0 0;"></div>
<div class="t" style="left:558.5px;top:213px;font-size:12px;line-height:16px;color:#1a1a1a;letter-spacing:-0.24px;">Heatmap</div>
<div class="t" style="left:620.5px;top:213px;font-size:12px;line-height:16px;color:#6e6e6e;letter-spacing:-0.43px;">Bar Chart</div>
<div class="b" style="left:568px;top:236px;width:1011px;height:18px;border:1px solid #c6c6c6;background:#f8f8f8;"></div>
<svg style="left:558px;top:240px;" width="10" height="9" viewBox="0 0 10 9"><path d="M9 0.5 L9 8.5 L0.8 8.5 Z" fill="#c9c9c9" stroke="#7d7d7d" stroke-width="1"/></svg>
<svg style="left:572px;top:238.5px;" width="14" height="13" viewBox="0 0 14 13"><rect x="0.5" y="0.5" width="13" height="12" rx="2.2" fill="#fbfbfb" stroke="#c4c4c4"/><path d="M3 4.2 L11 4.2 L7 9.6 Z" fill="#d80f16"/><path d="M3 4.2 L11 4.2" stroke="#8e0a10" stroke-width="1"/></svg>
<div class="t" style="left:588px;top:237px;font-size:12px;line-height:16px;font-weight:bold;letter-spacing:-0.18px;">Heatmap: Risk Signal by Study Site Identifier and Risk Metric</div>
<svg style="left:808px;top:257px;" width="762" height="465" viewBox="0 0 762 465"><g shape-rendering="crispEdges"><rect x="0" y="0" width="762" height="465" fill="#dc9283"/><rect x="0" y="0" width="76" height="42" fill="#bcd7bb"/><rect x="152" y="0" width="19" height="42" fill="#bcd7bb"/><rect x="171" y="0" width="19" height="42" fill="#eeed9f"/><rect x="209" y="0" width="19" height="42" fill="#eeed9f"/><rect x="285" y="0" width="57" height="42" fill="#bcd7bb"/><rect x="361" y="0" width="39" height="42" fill="#bcd7bb"/><rect x="419" y="0" width="19" height="42" fill="#eeed9f"/><rect x="438" y="0" width="38" height="42" fill="#bcd7bb"/><rect x="533" y="0" width="38" height="42" fill="#bcd7bb"/><rect x="590" y="0" width="19" height="42" fill="#bcd7bb"/><rect x="628" y="0" width="95" height="42" fill="#bcd7bb"/><rect x="742" y="0" width="19" height="42" fill="#bcd7bb"/><rect x="0" y="42" width="76" height="42" fill="#bcd7bb"/><rect x="152" y="42" width="19" height="42" fill="#eeed9f"/><rect x="171" y="42" width="19" height="42" fill="#bcd7bb"/><rect x="247" y="42" width="19" height="42" fill="#bcd7bb"/><rect x="285" y="42" width="95" height="42" fill="#bcd7bb"/><rect x="438" y="42" width="19" height="42" fill="#bcd7bb"/><rect x="533" y="42" width="57" height="42" fill="#bcd7bb"/><rect x="628" y="42" width="95" height="42" fill="#bcd7bb"/><rect x="742" y="42" width="19" height="42" fill="#bcd7bb"/><rect x="0" y="84" width="19" height="43" fill="#bcd7bb"/><rect x="19" y="84" width="19" height="43" fill="#eeed9f"/><rect x="38" y="84" width="38" height="43" fill="#bcd7bb"/><rect x="152" y="84" width="19" height="43" fill="#bcd7bb"/><rect x="209" y="84" width="38" height="43" fill="#bcd7bb"/><rect x="266" y="84" width="76" height="43" fill="#bcd7bb"/><rect x="361" y="84" width="39" height="43" fill="#bcd7bb"/><rect x="419" y="84" width="57" height="43" fill="#bcd7bb"/><rect x="533" y="84" width="38" height="43" fill="#bcd7bb"/><rect x="590" y="84" width="19" height="43" fill="#bcd7bb"/><rect x="628" y="84" width="95" height="43" fill="#bcd7bb"/><rect x="723" y="84" width="19" height="43" fill="#eeed9f"/><rect x="742" y="84" width="19" height="43" fill="#bcd7bb"/><rect x="0" y="127" width="761" height="42" fill="#bcd7bb"/><rect x="0" y="169" width="19" height="42" fill="#bcd7bb"/><rect x="57" y="169" width="19" height="42" fill="#bcd7bb"/><rect x="171" y="169" width="19" height="42" fill="#eeed9f"/><rect x="247" y="169" width="19" height="42" fill="#eeed9f"/><rect x="285" y="169" width="19" height="42" fill="#bcd7bb"/><rect x="304" y="169" width="19" height="42" fill="#eeed9f"/><rect x="323" y="169" width="57" height="42" fill="#bcd7bb"/><rect x="438" y="169" width="19" height="42" fill="#bcd7bb"/><rect x="533" y="169" width="19" height="42" fill="#eeed9f"/><rect x="552" y="169" width="19" height="42" fill="#bcd7bb"/><rect x="571" y="169" width="19" height="42" fill="#eeed9f"/><rect x="628" y="169" width="38" height="42" fill="#bcd7bb"/><rect x="704" y="169" width="19" height="42" fill="#bcd7bb"/><rect x="0" y="211" width="19" height="42" fill="#bcd7bb"/><rect x="38" y="211" width="19" height="42" fill="#bcd7bb"/><rect x="209" y="211" width="38" height="42" fill="#bcd7bb"/><rect x="266" y="211" width="38" height="42" fill="#bcd7bb"/><rect x="323" y="211" width="19" height="42" fill="#bcd7bb"/><rect x="380" y="211" width="20" height="42" fill="#bcd7bb"/><rect x="419" y="211" width="57" height="42" fill="#bcd7bb"/><rect x="495" y="211" width="19" height="42" fill="#bcd7bb"/><rect x="533" y="211" width="19" height="42" fill="#bcd7bb"/><rect x="590" y="211" width="57" height="42" fill="#bcd7bb"/><rect x="666" y="211" width="95" height="42" fill="#bcd7bb"/><rect x="0" y="253" width="19" height="42" fill="#bcd7bb"/><rect x="38" y="253" width="19" height="42" fill="#bcd7bb"/><rect x="209" y="253" width="38" height="42" fill="#bcd7bb"/><rect x="266" y="253" width="38" height="42" fill="#bcd7bb"/><rect x="323" y="253" width="19" height="42" fill="#bcd7bb"/><rect x="380" y="253" width="20" height="42" fill="#bcd7bb"/><rect x="419" y="253" width="57" height="42" fill="#bcd7bb"/><rect x="495" y="253" width="19" height="42" fill="#bcd7bb"/><rect x="533" y="253" width="19" height="42" fill="#bcd7bb"/><rect x="590" y="253" width="57" height="42" fill="#bcd7bb"/><rect x="666" y="253" width="95" height="42" fill="#bcd7bb"/><rect x="38" y="295" width="19" height="42" fill="#eeed9f"/><rect x="57" y="295" width="19" height="42" fill="#bcd7bb"/><rect x="171" y="295" width="19" height="42" fill="#eeed9f"/><rect x="304" y="295" width="19" height="42" fill="#eeed9f"/><rect x="342" y="295" width="38" height="42" fill="#bcd7bb"/><rect x="457" y="295" width="19" height="42" fill="#eeed9f"/><rect x="514" y="295" width="19" height="42" fill="#bcd7bb"/><rect x="552" y="295" width="19" height="42" fill="#eeed9f"/><rect x="628" y="295" width="19" height="42" fill="#bcd7bb"/><rect x="666" y="295" width="38" height="42" fill="#bcd7bb"/><rect x="704" y="295" width="19" height="42" fill="#eeed9f"/><rect x="38" y="337" width="38" height="43" fill="#eeed9f"/><rect x="304" y="337" width="19" height="43" fill="#eeed9f"/><rect x="342" y="337" width="19" height="43" fill="#eeed9f"/><rect x="361" y="337" width="19" height="43" fill="#bcd7bb"/><rect x="380" y="337" width="20" height="43" fill="#eeed9f"/><rect x="457" y="337" width="19" height="43" fill="#bcd7bb"/><rect x="533" y="337" width="19" height="43" fill="#eeed9f"/><rect x="552" y="337" width="19" height="43" fill="#bcd7bb"/><rect x="590" y="337" width="19" height="43" fill="#eeed9f"/><rect x="628" y="337" width="19" height="43" fill="#eeed9f"/><rect x="647" y="337" width="19" height="43" fill="#bcd7bb"/><rect x="666" y="337" width="57" height="43" fill="#eeed9f"/><rect x="76" y="380" width="19" height="42" fill="#eeed9f"/><rect x="285" y="380" width="19" height="42" fill="#eeed9f"/><rect x="304" y="380" width="19" height="42" fill="#bcd7bb"/><rect x="361" y="380" width="19" height="42" fill="#eeed9f"/><rect x="552" y="380" width="19" height="42" fill="#bcd7bb"/><rect x="590" y="380" width="19" height="42" fill="#eeed9f"/><rect x="685" y="380" width="19" height="42" fill="#bcd7bb"/><rect x="76" y="422" width="19" height="42" fill="#eeed9f"/><rect x="152" y="422" width="19" height="42" fill="#eeed9f"/><rect x="285" y="422" width="38" height="42" fill="#eeed9f"/><rect x="361" y="422" width="19" height="42" fill="#eeed9f"/><rect x="438" y="422" width="19" height="42" fill="#eeed9f"/><rect x="552" y="422" width="19" height="42" fill="#eeed9f"/><rect x="685" y="422" width="19" height="42" fill="#eeed9f"/><path d="M19.5 0V465M38.5 0V465M57.5 0V465M76.5 0V465M95.5 0V465M114.5 0V465M133.5 0V465M152.5 0V465M171.5 0V465M190.5 0V465M209.5 0V465M228.5 0V465M247.5 0V465M266.5 0V465M285.5 0V465M304.5 0V465M323.5 0V465M342.5 0V465M361.5 0V465M380.5 0V465M400.5 0V465M419.5 0V465M438.5 0V465M457.5 0V465M476.5 0V465M495.5 0V465M514.5 0V465M533.5 0V465M552.5 0V465M571.5 0V465M590.5 0V465M609.5 0V465M628.5 0V465M647.5 0V465M666.5 0V465M685.5 0V465M704.5 0V465M723.5 0V465M742.5 0V465M0 42.5H762M0 84.5H762M0 127.5H762M0 169.5H762M0 211.5H762M0 253.5H762M0 295.5H762M0 337.5H762M0 380.5H762M0 422.5H762" stroke="#000" stroke-width="1" fill="none"/><rect x="0.5" y="0.5" width="761" height="464" fill="none" stroke="#a2a2a2" stroke-width="1"/></g></svg>
<div class="t" style="left:693.5px;top:271px;font-size:12px;line-height:16px;letter-spacing:-0.09px;">Overall Risk Indicator</div>
<div class="t" style="left:693.5px;top:305px;font-size:12px;line-height:16px;letter-spacing:-0.09px;">Overall Risk Indicator</div>
<div class="t" style="left:746px;top:321px;font-size:12px;line-height:16px;letter-spacing:0.07px;">Disposition</div>
<div class="t" style="left:659px;top:355px;font-size:12px;line-height:16px;letter-spacing:-0.17px;">Overall Risk Indicator Safety</div>
<div class="t" style="left:706px;top:390px;font-size:12px;line-height:16px;letter-spacing:-0.31px;">Percent Screen Fail</div>
<div class="t" style="left:718px;top:406px;font-size:12px;line-height:16px;letter-spacing:-0.02px;">of Total Subjects</div>
<div class="t" style="left:678px;top:432px;font-size:12px;line-height:16px;letter-spacing:0px;">Percent Discontinued of</div>
<div class="t" style="left:693px;top:448px;font-size:12px;line-height:16px;letter-spacing:-0.22px;">Randomized Subjects</div>
<div class="t" style="left:712px;top:474px;font-size:12px;line-height:16px;letter-spacing:-0.15px;">Percent Deaths of</div>
<div class="t" style="left:693px;top:490px;font-size:12px;line-height:16px;letter-spacing:-0.22px;">Randomized Subjects</div>
<div class="t" style="left:679.5px;top:524px;font-size:12px;line-height:16px;letter-spacing:-0.18px;">Deaths per PatientWeek</div>
<div class="t" style="left:719.5px;top:558px;font-size:12px;line-height:16px;letter-spacing:-0.26px;">Average AEs per</div>
<div class="t" style="left:697.5px;top:574px;font-size:12px;line-height:16px;letter-spacing:-0.15px;">Randomized Subject</div>
<div class="t" style="left:697px;top:609px;font-size:12px;line-height:16px;letter-spacing:-0.28px;">AEs per PatientWeek</div>
<div class="t" style="left:713.5px;top:643px;font-size:12px;line-height:16px;letter-spacing:-0.41px;">Average SAEs per</div>
<div class="t" style="left:697.5px;top:659px;font-size:12px;line-height:16px;letter-spacing:-0.15px;">Randomized Subject</div>
<div class="t" style="left:690.5px;top:693px;font-size:12px;line-height:16px;letter-spacing:-0.34px;">SAEs per PatientWeek</div>
<div class="t" style="left:615.5px;top:313px;font-size:12px;line-height:16px;letter-spacing:-0.07px;">Overall</div>
<svg style="left:655px;top:259px;" width="4" height="124" viewBox="0 0 4 124"><path d="M3 0.5 H0.5 V123.5 H3" stroke="#8c8c8c" stroke-width="1" fill="none"/></svg>
<div class="t" style="left:595.5px;top:398px;font-size:12px;line-height:16px;letter-spacing:0.01px;">Enrollment</div>
<svg style="left:655px;top:386px;" width="4" height="39" viewBox="0 0 4 39"><path d="M3 0.5 H0.5 V38.5 H3" stroke="#8c8c8c" stroke-width="1" fill="none"/></svg>
<div class="t" style="left:594px;top:440px;font-size:12px;line-height:16px;letter-spacing:0.03px;">Disposition</div>
<svg style="left:655px;top:428px;" width="4" height="39" viewBox="0 0 4 39"><path d="M3 0.5 H0.5 V38.5 H3" stroke="#8c8c8c" stroke-width="1" fill="none"/></svg>
<div class="t" style="left:620.5px;top:587px;font-size:12px;line-height:16px;letter-spacing:-0.25px;">Safety</div>
<svg style="left:655px;top:470px;" width="4" height="250" viewBox="0 0 4 250"><path d="M3 0.5 H0.5 V249.5 H3" stroke="#8c8c8c" stroke-width="1" fill="none"/></svg>
<div class="t" style="left:810.54px;top:723px;font-size:12px;line-height:16px;">01</div>
<div class="t" style="left:829.56px;top:723px;font-size:12px;line-height:16px;">02</div>
<div class="t" style="left:848.59px;top:723px;font-size:12px;line-height:16px;">03</div>
<div class="t" style="left:867.61px;top:723px;font-size:12px;line-height:16px;">04</div>
<div class="t" style="left:886.64px;top:723px;font-size:12px;line-height:16px;">05</div>
<div class="t" style="left:905.66px;top:723px;font-size:12px;line-height:16px;">06</div>
<div class="t" style="left:924.69px;top:723px;font-size:12px;line-height:16px;">07</div>
<div class="t" style="left:943.71px;top:723px;font-size:12px;line-height:16px;">08</div>
<div class="t" style="left:962.74px;top:723px;font-size:12px;line-height:16px;">09</div>
<div class="t" style="left:981.76px;top:723px;font-size:12px;line-height:16px;">10</div>
<div class="t" style="left:1000.79px;top:723px;font-size:12px;line-height:16px;">12</div>
<div class="t" style="left:1019.81px;top:723px;font-size:12px;line-height:16px;">14</div>
<div class="t" style="left:1038.84px;top:723px;font-size:12px;line-height:16px;">16</div>
<div class="t" style="left:1057.86px;top:723px;font-size:12px;line-height:16px;">17</div>
<div class="t" style="left:1076.89px;top:723px;font-size:12px;line-height:16px;">18</div>
<div class="t" style="left:1095.91px;top:723px;font-size:12px;line-height:16px;">19</div>
<div class="t" style="left:1114.94px;top:723px;font-size:12px;line-height:16px;">20</div>
<div class="t" style="left:1133.96px;top:723px;font-size:12px;line-height:16px;">21</div>
<div class="t" style="left:1152.99px;top:723px;font-size:12px;line-height:16px;">22</div>
<div class="t" style="left:1172.01px;top:723px;font-size:12px;line-height:16px;">23</div>
<div class="t" style="left:1191.04px;top:723px;font-size:12px;line-height:16px;">24</div>
<div class="t" style="left:1210.06px;top:723px;font-size:12px;line-height:16px;">25</div>
<div class="t" style="left:1229.09px;top:723px;font-size:12px;line-height:16px;">26</div>
<div class="t" style="left:1248.11px;top:723px;font-size:12px;line-height:16px;">27</div>
<div class="t" style="left:1267.14px;top:723px;font-size:12px;line-height:16px;">28</div>
<div class="t" style="left:1286.16px;top:723px;font-size:12px;line-height:16px;">29</div>
<div class="t" style="left:1305.19px;top:723px;font-size:12px;line-height:16px;">30</div>
<div class="t" style="left:1324.21px;top:723px;font-size:12px;line-height:16px;">31</div>
<div class="t" style="left:1343.24px;top:723px;font-size:12px;line-height:16px;">32</div>
<div class="t" style="left:1362.26px;top:723px;font-size:12px;line-height:16px;">33</div>
<div class="t" style="left:1381.29px;top:723px;font-size:12px;line-height:16px;">34</div>
<div class="t" style="left:1400.31px;top:723px;font-size:12px;line-height:16px;">35</div>
<div class="t" style="left:1419.34px;top:723px;font-size:12px;line-height:16px;">36</div>
<div class="t" style="left:1438.36px;top:723px;font-size:12px;line-height:16px;">37</div>
<div class="t" style="left:1457.39px;top:723px;font-size:12px;line-height:16px;">39</div>
<div class="t" style="left:1476.41px;top:723px;font-size:12px;line-height:16px;">40</div>
<div class="t" style="left:1495.44px;top:723px;font-size:12px;line-height:16px;">42</div>
<div class="t" style="left:1514.46px;top:723px;font-size:12px;line-height:16px;">44</div>
<div class="t" style="left:1533.49px;top:723px;font-size:12px;line-height:16px;">45</div>
<div class="t" style="left:1552.51px;top:723px;font-size:12px;line-height:16px;">46</div>
<div class="t" style="left:1137px;top:739px;font-size:12px;line-height:16px;letter-spacing:-0.1px;">Study Site Identifier</div>
<svg style="left:140px;top:-8px;" width="182" height="123" viewBox="0 0 182 123"><path d="M53 12H149A11 11 0 0 1 160 23V50A11 11 0 0 1 149 61H94.2L51.05 80.9L64 61H53A11 11 0 0 1 42 50V23A11 11 0 0 1 53 12Z" fill="#e5f700" stroke="#5a1ee6" stroke-width="4" stroke-linejoin="miter" stroke-miterlimit="12"/><text x="99.85" y="32" text-anchor="middle" font-size="18.7" font-weight="bold" letter-spacing="0.33" fill="#5a1ee6">Drill Down</text><text x="99.85" y="54" text-anchor="middle" font-size="18.7" font-weight="bold" letter-spacing="0.33" fill="#5a1ee6">Buttons</text></svg>
<svg style="left:167px;top:311px;" width="154" height="124" viewBox="0 0 154 124"><path d="M53 12H121.1A11 11 0 0 1 132.1 23V51.9A11 11 0 0 1 121.1 62.9H53A11 11 0 0 1 42 51.9V23A11 11 0 0 1 53 12Z" fill="#e5f700" stroke="#5a1ee6" stroke-width="4" stroke-linejoin="miter" stroke-miterlimit="12"/><text x="85.85" y="33" text-anchor="middle" font-size="18.7" font-weight="bold" letter-spacing="0.33" fill="#5a1ee6">Report</text><text x="85.85" y="55" text-anchor="middle" font-size="18.7" font-weight="bold" letter-spacing="0.33" fill="#5a1ee6">Options</text></svg>
<svg style="left:909px;top:213px;" width="328" height="127" viewBox="0 0 328 127"><path d="M67.8 11.9H280.2A26 22 0 0 1 306.2 33.9V44A26 22 0 0 1 280.2 66H67.8A26 22 0 0 1 41.8 44V33.9A26 22 0 0 1 67.8 11.9Z" fill="#e5f700" stroke="#5a1ee6" stroke-width="3.6" stroke-linejoin="miter" stroke-miterlimit="12"/><text x="173.15" y="34" text-anchor="middle" font-size="18.7" font-weight="bold" letter-spacing="0.33" fill="#5a1ee6">Site Level Risk Indicator</text><text x="173.15" y="56" text-anchor="middle" font-size="18.7" font-weight="bold" letter-spacing="0.33" fill="#5a1ee6">Plots and Charts</text></svg>
<svg style="left:505px;top:695px;" width="216" height="145" viewBox="0 0 216 145"><path d="M54.9 11.9H182.2A13 13 0 0 1 195.2 24.9V71A13 13 0 0 1 182.2 84H107.9L20.7 120.2L68.9 84H54.9A13 13 0 0 1 41.9 71V24.9A13 13 0 0 1 54.9 11.9Z" fill="#e5f700" stroke="#5a1ee6" stroke-width="3.6" stroke-linejoin="miter" stroke-miterlimit="12"/><text x="117.15" y="32" text-anchor="middle" font-size="18.7" font-weight="bold" letter-spacing="0.33" fill="#5a1ee6">Additional</text><text x="117.15" y="54" text-anchor="middle" font-size="18.7" font-weight="bold" letter-spacing="0.33" fill="#5a1ee6">Risk Indicator</text><text x="117.15" y="76" text-anchor="middle" font-size="18.7" font-weight="bold" letter-spacing="0.33" fill="#5a1ee6">Sections</text></svg>
</div>
</body></html>
